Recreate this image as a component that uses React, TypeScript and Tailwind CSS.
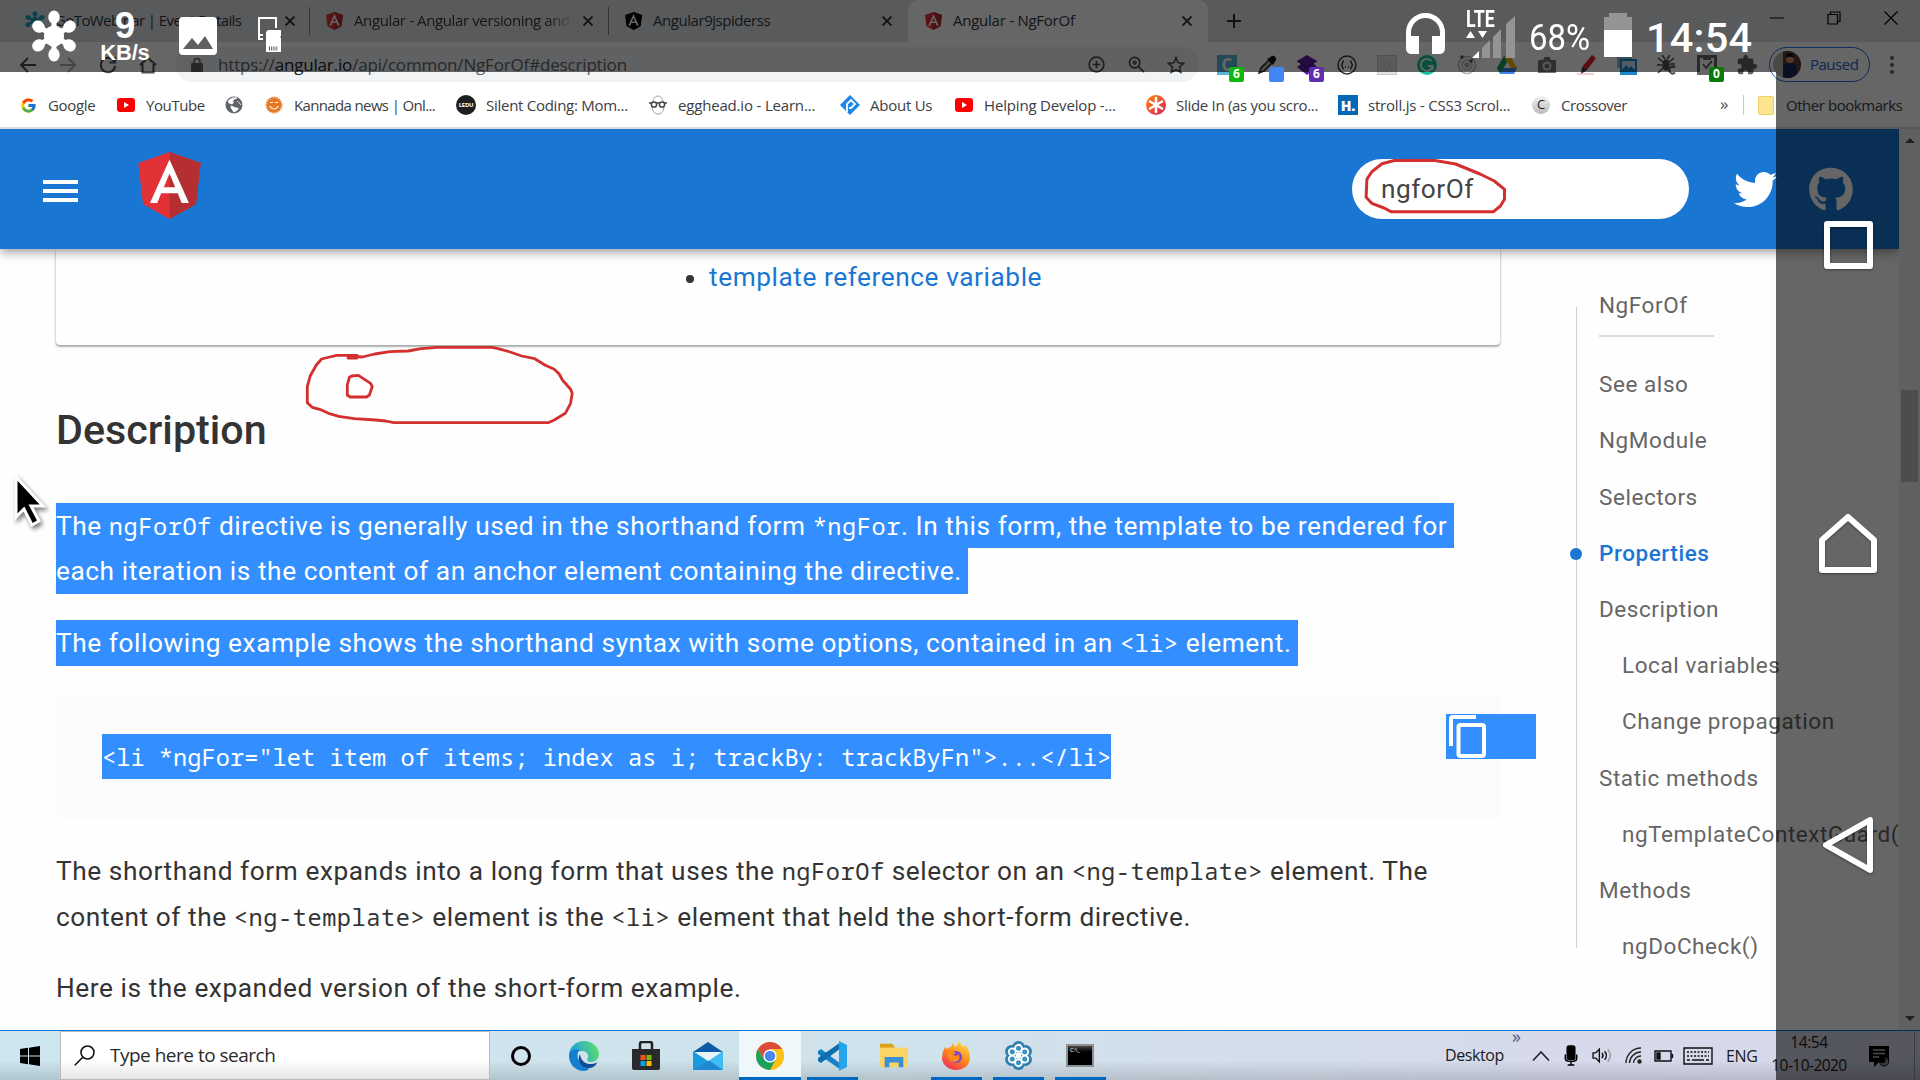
import type { ReactNode } from "react";
import { FcGoogle } from "react-icons/fc";
import { FaTwitter, FaGithub } from "react-icons/fa";

function AngularLogo({ className, dark }: { className: string; dark?: boolean }) {
  return (
    <svg viewBox="31 30 188 200" preserveAspectRatio="none" className={className}>
      <path d="M125 30 31.9 63.2 46.1 186.3 125 230 203.9 186.3 218.1 63.2Z" fill={dark ? "#0b0b0d" : "#e23237"} />
      <path d="M125 30V230L203.9 186.3 218.1 63.2Z" fill={dark ? "#000" : "#b52e31"} />
      <path d="M125 52.1 66.8 182.6h21.7l11.7-29.2h49.4l11.7 29.2H183ZM142 135.4H108l17-40.9Z" fill="#fff" fillRule="evenodd" />
    </svg>
  );
}

const petals = [0, 60, 120, 180, 240, 300];

function Flower({ className, fill }: { className: string; fill: string }) {
  return (
    <svg viewBox="0 0 50 54" className={className} preserveAspectRatio="none" fill={fill} stroke={fill}>
      <circle cx="25" cy="27" r="11" stroke="none" />
      {petals.map((a) => (
        <g key={a} transform={`rotate(${a} 25 27)`}>
          <path d="M25 22V8" strokeWidth="5.5" />
          <ellipse cx="25" cy="7.5" rx="6.2" ry="7" stroke="none" />
        </g>
      ))}
    </svg>
  );
}

function YouTubeIcon() {
  return (
    <svg viewBox="0 0 20 16" className="h-[16px] w-[20px]">
      <rect x="1" y="1" width="18" height="14" rx="3" fill="#f00" />
      <path d="M8 5v6l5-3z" fill="#fff" />
    </svg>
  );
}

function Close({ className = "h-[10px] w-[10px]" }: { className?: string }) {
  return (
    <svg viewBox="0 0 10 10" className={className} stroke="#2b2e31" strokeWidth="1.9">
      <path d="M.5.5l9 9M9.5.5l-9 9" />
    </svg>
  );
}

function Tab({ icon, title, titleClass, active, close, sep }: { icon: ReactNode; title: string; titleClass: string; active?: boolean; close: string; sep?: boolean }) {
  return (
    <div className={active ? "flex h-[42px] w-[300px] items-center rounded-t-[10px] bg-white pl-[15px]" : "flex h-[42px] w-[299px] items-center pl-[14px]"}>
      <div className="flex w-[20px] shrink-0 justify-center">{icon}</div>
      <div className={`ml-[10px] h-[22px] shrink-0 overflow-hidden whitespace-nowrap text-[15px] leading-[21px] text-[#35383c] ${titleClass}`}>{title}</div>
      <div className={`shrink-0 ${close}`}>
        <Close />
      </div>
      {sep && <div className="ml-auto h-[28px] w-px bg-[#7d8084]" />}
    </div>
  );
}

function Cell({ children }: { children?: ReactNode }) {
  return <div className="relative flex h-[36px] w-[40px] shrink-0 items-center justify-center">{children}</div>;
}

function Badge({ children, className }: { children?: ReactNode; className: string }) {
  return (
    <div className={`absolute left-[22px] top-[20px] z-50 flex h-[15px] w-[15px] items-center justify-center rounded-[2px] text-[12px] font-bold leading-none text-white ${className}`}>
      {children}
    </div>
  );
}

function TabStrip() {
  return (
    <div className="flex h-[42px] w-full bg-[#dee1e6] pl-[11px]">
      <Tab icon={<Flower className="h-[20px] w-[20px]" fill="#1aa3b8" />} title="GoToWebinar | Event Details" titleClass="w-[200px] tracking-[-0.6px]" close="ml-[30px]" sep />
      <Tab
        icon={<AngularLogo className="h-[18px] w-[17px]" />}
        title="Angular - Angular versioning and"
        titleClass="w-[219px] tracking-[-0.38px] [mask-image:linear-gradient(90deg,#000_88%,transparent)]"
        close="ml-[10px]"
        sep
      />
      <Tab icon={<AngularLogo dark className="h-[18px] w-[17px]" />} title="Angular9jspiderss" titleClass="w-[219px] tracking-[-0.45px]" close="ml-[10px]" />
      <Tab icon={<AngularLogo className="h-[18px] w-[17px]" />} title="Angular - NgForOf" titleClass="w-[219px] tracking-[-0.25px]" active close="ml-[10px]" />
      <div className="flex h-[42px] items-center pl-[18px]">
        <svg viewBox="0 0 16 16" className="h-[16px] w-[16px]" stroke="#2b2e31" strokeWidth="2">
          <path d="M8 1v14M1 8h14" />
        </svg>
      </div>
      <div className="ml-auto flex h-[36px] items-center gap-[43px] pr-[22px]">
        <svg viewBox="0 0 14 14" className="h-[14px] w-[14px]" stroke="#000">
          <path d="M0 7h14" />
        </svg>
        <svg viewBox="0 0 14 14" className="h-[14px] w-[14px]" stroke="#000" fill="none" strokeWidth="1.2">
          <path d="M1 3.5h9.500v9.500H1zM3.500 3.500V1H13v9.500h-2.500" />
        </svg>
        <svg viewBox="0 0 14 14" className="h-[14px] w-[14px]" stroke="#000" strokeWidth="1.2">
          <path d="M.5.5l13 13M13.500.5l-13 13" />
        </svg>
      </div>
    </div>
  );
}

function Toolbar() {
  return (
    <div className="flex h-[45px] w-full items-center bg-white pl-[8px]">
      <div className="flex w-[167px] text-[#3c4043]">
        <Cell>
          <svg viewBox="0 0 18 18" className="h-[18px] w-[18px]" fill="none" stroke="#4a4d51" strokeWidth="2">
            <path d="M17 9H2M9 2 2 9l7 7" />
          </svg>
        </Cell>
        <Cell>
          <svg viewBox="0 0 18 18" className="h-[18px] w-[18px]" fill="none" stroke="#a9abae" strokeWidth="2">
            <path d="M1 9h15M9 2l7 7-7 7" />
          </svg>
        </Cell>
        <Cell>
          <svg viewBox="0 0 18 18" className="h-[18px] w-[18px]" fill="none" stroke="#4a4d51" strokeWidth="2">
            <path d="M15 5A7.200 7.200 0 1 0 16.200 10M16 1v5.500h-5.500" />
          </svg>
        </Cell>
        <Cell>
          <svg viewBox="0 0 18 18" className="h-[18px] w-[18px]" fill="none" stroke="#4a4d51" strokeWidth="2">
            <path d="M1 9 9 2l8 7M3.500 8v8.500h11V8" />
          </svg>
        </Cell>
      </div>
      <div className="flex h-[35px] w-[1024px] shrink-0 items-center rounded-full bg-[#f1f3f4] pl-[16px]">
        <svg viewBox="0 0 12 14" className="h-[14px] w-[12px]" fill="#5f6368">
          <rect x="0" y="5" width="12" height="9" rx="1.200" />
          <path d="M3 6V3.500a3 3 0 0 1 6 0V6" fill="none" stroke="#5f6368" strokeWidth="1.500" />
        </svg>
        <div className="ml-[15px] whitespace-nowrap text-[17px] tracking-[-0.170px] text-[#606468]">
          https://<span className="text-[#202124]">angular.io</span>/api/common/NgForOf#description
        </div>
        <div className="ml-auto flex pr-[3px]">
          <Cell>
            <svg viewBox="0 0 18 18" className="h-[17px] w-[17px]" fill="none" stroke="#4a4d51" strokeWidth="1.800">
              <circle cx="9" cy="9" r="7.800" />
              <path d="M9 5v8M5 9h8" />
            </svg>
          </Cell>
          <Cell>
            <svg viewBox="0 0 18 18" className="h-[17px] w-[17px]" fill="none" stroke="#4a4d51" strokeWidth="1.800">
              <circle cx="7" cy="7" r="5.500" />
              <path d="M11 11l6 6M7 4.500v5M4.500 7h5" />
            </svg>
          </Cell>
          <Cell>
            <svg viewBox="0 0 18 18" className="h-[18px] w-[18px]" fill="none" stroke="#4a4d51" strokeWidth="1.600">
              <path d="M9 1.500l2.200 5.200 5.600.5-4.300 3.700 1.300 5.500L9 13.500l-4.800 2.900 1.300-5.500L1.200 7.200l5.600-.5z" />
            </svg>
          </Cell>
        </div>
      </div>
      <div className="ml-[8px] flex">
        <Cell>
          <div className="flex h-[20px] w-[20px] items-center justify-center bg-[#59b6d8] text-[17px] font-bold text-white">C</div>
          <Badge className="bg-[#0bb80b]">6</Badge>
        </Cell>
        <Cell>
          <svg viewBox="0 0 20 20" className="h-[20px] w-[20px]">
            <path d="M2 18l2-5 8-8 3 3-8 8z" fill="#bbb" stroke="#222" strokeWidth="1.500" />
            <path d="M10 4l6 6 1-2 2-3c1-2-2-5-4-4l-3 2z" fill="#111" />
          </svg>
          <Badge className="bg-[#4285f4]" />
        </Cell>
        <Cell>
          <svg viewBox="0 0 20 20" className="h-[20px] w-[20px]" fill="#5a1fa0">
            <path d="M10 0l10 6-4 2 4 4-10 8L0 12l4-3-4-3z" />
            <path d="M0 6l10 6 10-6" fill="none" stroke="#3c1080" />
          </svg>
          <Badge className="bg-[#5f2eb0]">6</Badge>
        </Cell>
        <Cell>
          <svg viewBox="0 0 20 20" className="h-[20px] w-[20px]" fill="none" stroke="#333" strokeWidth="1.400">
            <circle cx="10" cy="10" r="9" />
            <path d="M7 6c-2 0-1 3-2.500 4C6 11 5 14 7 14M13 6c2 0 1 3 2.500 4-1.500 1-.5 4-2.500 4M8 12h1M11 12h1" />
          </svg>
        </Cell>
        <Cell>
          <svg viewBox="0 0 20 20" className="h-[20px] w-[20px]" fill="none" stroke="#c9c9c9">
            <rect x=".5" y=".5" width="19" height="19" fill="#e4e4e4" />
            <circle cx="10" cy="10" r="3" />
            <path d="M4 4l3 3M16 4l-3 3M4 16l3-3M16 16l-3-3M10 2v3M10 15v3M2 10h3M15 10h3" />
          </svg>
        </Cell>
        <Cell>
          <svg viewBox="0 0 20 20" className="h-[20px] w-[20px]" fill="none">
            <circle cx="10" cy="10" r="10" fill="#15c39a" />
            <path d="M14.500 6A6 6 0 1 0 15.500 12M15.500 15v-4H11" stroke="#fff" strokeWidth="1.900" />
          </svg>
        </Cell>
        <Cell>
          <svg viewBox="0 0 20 20" className="h-[20px] w-[20px]" fill="none" stroke="#b3b3b3" strokeWidth="1.500">
            <circle cx="10" cy="10" r="8.500" />
            <circle cx="10" cy="10" r="5" />
            <circle cx="10" cy="10" r="2" fill="#b3b3b3" />
            <circle cx="5" cy="2" r="1" stroke="#555" />
            <circle cx="14" cy="6" r="1" stroke="#555" />
          </svg>
        </Cell>
        <Cell>
          <svg viewBox="0 0 20 18" className="h-[18px] w-[20px]">
            <path d="M7 0 0 12l3 6 7-12z" fill="#0f9d58" />
            <path d="M7 0h6l7 12h-6z" fill="#f4b400" />
            <path d="M6 12h14l-3 6H3z" fill="#4285f4" />
          </svg>
        </Cell>
        <Cell>
          <svg viewBox="0 0 18 16" className="h-[18px] w-[18px]" fill="#777">
            <path d="M1 3h4l1.500-3h5L13 3h4l1 1v12H0V4z" />
            <circle cx="9" cy="9" r="4.500" fill="#ddd" />
            <circle cx="9" cy="9" r="2.500" />
          </svg>
        </Cell>
        <Cell>
          <svg viewBox="0 0 20 20" className="h-[20px] w-[20px]">
            <path d="M15 0l4 3-9 12-5-3z" fill="#d9222a" />
            <path d="M5 12l5 3-6 4z" fill="#333" />
            <path d="M0 19h17" stroke="#e99" />
          </svg>
        </Cell>
        <Cell>
          <svg viewBox="0 0 20 20" className="h-[20px] w-[20px]">
            <path d="M0 0h15v13H0z" fill="#7fc0e4" />
            <path d="M3 4h17v16H3z" fill="#1c87c9" />
            <path d="M5 6h13v9H5z" fill="#cfe9f7" />
            <path d="M5 15l4-5 3 3 2-2 4 4z" fill="#1c87c9" />
          </svg>
        </Cell>
        <Cell>
          <svg viewBox="0 0 20 20" className="h-[20px] w-[20px]" stroke="#4f4f4f" strokeWidth="1.500" fill="none">
            <ellipse cx="9" cy="10" rx="3" ry="5" fill="#4f4f4f" />
            <path d="M1 3l5 4M17 3l-5 4M0 10h5M18 9h-5M1 18l5-5M5 0l3 4M13 0l-3 4" />
            <path d="M18 12.500a3.400 3.400 0 1 0 0 5" strokeWidth="2" />
          </svg>
        </Cell>
        <Cell>
          <svg viewBox="0 0 20 20" className="h-[20px] w-[20px]" fill="none" stroke="#666" strokeWidth="3">
            <path d="M1.500 1.500h17v17h-17z" />
            <path d="M6 9l3 4 6-7M6 4h8" strokeWidth="2" />
          </svg>
          <Badge className="bg-[#077a07]">0</Badge>
        </Cell>
        <Cell>
          <svg viewBox="0 0 24 24" className="h-[22px] w-[22px]" fill="#5f6368">
            <path d="M20.500 11H19V7c0-1.100-.9-2-2-2h-4V3.500a2.500 2.500 0 0 0-5 0V5H4c-1.100 0-2 .9-2 2v3.800h1.500a2.700 2.700 0 0 1 0 5.400H2V20c0 1.100.9 2 2 2h3.800v-1.500a2.700 2.700 0 0 1 5.400 0V22H17c1.100 0 2-.9 2-2v-4h1.500a2.500 2.500 0 0 0 0-5z" />
          </svg>
        </Cell>
      </div>
      <div className="ml-[2px] flex h-[35px] w-[101px] items-center rounded-full border-[1.500px] border-[#1a73e8] bg-white pl-[3px]">
        <div className="flex h-[27px] w-[28px] items-end justify-center overflow-hidden rounded-full bg-[#b9b4a6]">
          <svg viewBox="0 0 28 27" className="h-[27px] w-[28px]">
            <path d="M10 0h18v27H10z" fill="#5a3a32" />
            <path d="M10 27V16q2-4 7-4t7 4v11z" fill="#1b2a55" />
            <circle cx="17" cy="8" r="4" fill="#c98d6c" />
            <path d="M13 7q0-5 4-5t4 5q-4-3-8 0z" fill="#16100e" />
          </svg>
        </div>
        <div className="ml-[9px] text-[15px] tracking-[-0.5px] text-[#1a67d2]">Paused</div>
      </div>
      <div className="ml-[20px] flex flex-col gap-[3px]">
        <div className="h-[4px] w-[4px] rounded-full bg-[#5f6368]" />
        <div className="h-[4px] w-[4px] rounded-full bg-[#5f6368]" />
        <div className="h-[4px] w-[4px] rounded-full bg-[#5f6368]" />
      </div>
    </div>
  );
}

function Bookmark({ icon, label, className }: { icon: ReactNode; label?: string; className: string }) {
  return (
    <div className={`flex shrink-0 items-center whitespace-nowrap text-[15px] text-[#3c4043] ${className}`}>
      <div className="flex w-[20px] shrink-0 justify-center">{icon}</div>
      {label && <div className="ml-[10px]">{label}</div>}
    </div>
  );
}

function BookmarksBar() {
  return (
    <div className="flex h-[42px] w-full items-center border-b-2 border-[#dadce0] bg-white pb-[4px] pl-[18px]">
      <Bookmark className="w-[98px] tracking-[-0.350px]" icon={<FcGoogle size={17} />} label="Google" />
      <Bookmark className="w-[108px] tracking-[-0.400px]" icon={<YouTubeIcon />} label="YouTube" />
      <Bookmark
        className="w-[40px]"
        icon={
          <svg viewBox="0 0 18 18" className="h-[18px] w-[18px]">
            <circle cx="9" cy="9" r="8.500" fill="#5f6368" />
            <path d="M3 6c3 3 6 2 5 0s2-3 4-4c-4-1-8 1-9 4zM6 10c2 0 3 2 6 2s0 3-3 4c-2-1-1-3-3-4zM12 5c2 2 3 2 4 4" fill="#fff" stroke="#fff" strokeWidth=".8" />
          </svg>
        }
      />
      <Bookmark
        className="w-[192px] tracking-[-0.640px]"
        icon={
          <svg viewBox="0 0 18 18" className="h-[18px] w-[18px]">
            <circle cx="9" cy="9" r="7.500" fill="#e87722" stroke="#e8873c" strokeWidth="2" strokeDasharray="1.500 1" />
            <path d="M4.500 10q4.500 6 9 0M5 6.500h3M10 6.500h3" fill="none" stroke="#fff" strokeWidth="1.200" />
          </svg>
        }
        label="Kannada news | Onl..."
      />
      <Bookmark
        className="w-[192px] tracking-[-0.270px]"
        icon={
          <div className="flex h-[20px] w-[20px] items-center justify-center rounded-full bg-[#1d1e20] text-[6px] font-bold tracking-[-0.3px] text-white">LEDU</div>
        }
        label="Silent Coding: Mom..."
      />
      <Bookmark
        className="w-[192px] tracking-[-0.180px]"
        icon={
          <svg viewBox="0 0 20 20" className="h-[20px] w-[20px]" fill="none" stroke="#444">
            <path d="M10 1c4 0 6 6 6 10s-2 8-6 8-6-4-6-8S6 1 10 1z" stroke="#999" />
            <path d="M1 8h18" strokeWidth="1.500" />
            <circle cx="6" cy="9.500" r="2.600" strokeWidth="1.500" fill="#fff" />
            <circle cx="14" cy="9.500" r="2.600" strokeWidth="1.500" fill="#fff" />
          </svg>
        }
        label="egghead.io - Learn..."
      />
      <Bookmark
        className="w-[114px] tracking-[-0.250px]"
        icon={
          <svg viewBox="0 0 20 20" className="h-[20px] w-[20px]">
            <path d="M10 0l10 10-10 10L0 10z" fill="#1c87e8" />
            <path d="M7 17V9l4-4 4 4-4 4H9" fill="none" stroke="#fff" strokeWidth="1.800" />
          </svg>
        }
        label="About Us"
      />
      <Bookmark className="w-[192px] tracking-[-0.170px]" icon={<YouTubeIcon />} label="Helping Develop -..." />
      <Bookmark
        className="w-[192px] tracking-[-0.300px]"
        icon={
          <svg viewBox="0 0 20 20" className="h-[20px] w-[20px]">
            <defs>
              <linearGradient id="slide" x1="0" y1="0" x2="1" y2="1">
                <stop offset="0" stopColor="#ff8a00" />
                <stop offset="1" stopColor="#da1b60" />
              </linearGradient>
            </defs>
            <circle cx="10" cy="10" r="10" fill="url(#slide)" />
            <path d="M10 3v14M4 6.500l12 7M16 6.500l-12 7" stroke="#fff" strokeWidth="2.600" strokeLinecap="round" />
          </svg>
        }
        label="Slide In (as you scro..."
      />
      <Bookmark
        className="w-[193px] tracking-[-0.200px]"
        icon={<div className="flex h-[20px] w-[20px] items-center justify-center bg-[#0568b4] text-[14px] font-extrabold text-white">H.</div>}
        label="stroll.js - CSS3 Scrol..."
      />
      <Bookmark
        className="w-[189px] tracking-[-0.450px]"
        icon={<div className="flex h-[18px] w-[18px] items-center justify-center rounded-full bg-linear-to-b from-[#f4f4f4] to-[#b9b9b9] text-[13px] tracking-normal text-[#222]">C</div>}
        label="Crossover"
      />
      <div className="w-[23px] pb-[3px] text-[17px] text-[#4a4d51]">»</div>
      <div className="h-[20px] w-px bg-[#c9cbce]" />
      <div className="ml-[14px] h-[19px] w-[16px] rounded-[2px] border border-[#f0cf6a] bg-[#ffe48f]" />
      <div className="ml-[12px] whitespace-nowrap text-[15px] tracking-[-0.450px] text-[#3c4043]">Other bookmarks</div>
    </div>
  );
}

function SiteHeader() {
  return (
    <header className="relative z-10 flex h-[120px] w-[1899px] items-center bg-[#1976d2] shadow-[0_3px_10px_rgba(0,0,0,0.4)]">
      <div className="ml-[43px] mt-[3px] flex flex-col gap-[5px]">
        <div className="h-[4px] w-[35px] bg-white" />
        <div className="h-[4px] w-[35px] bg-white" />
        <div className="h-[4px] w-[35px] bg-white" />
      </div>
      <AngularLogo className="mb-[7px] ml-[60px] h-[67px] w-[63px]" />
      <div className="relative ml-[1151px] flex h-[60px] w-[337px] items-center rounded-full bg-white pl-[29px] pt-[2px] text-[26.250px] tracking-[0.500px] text-[#444]">
        ngforOf
        <svg viewBox="0 0 145 60" className="absolute left-[11px] top-0 h-[60px] w-[145px] overflow-visible" fill="none" stroke="#d32f2f" strokeWidth="3" strokeLinejoin="round">
          <path d="M72 1.500H31.300L19 4.700 8.800 12.700 3.900 20.300 3.100 38.300 8.800 44.300 21 49 28 52.700H130.500L137.400 47 141.500 40.300V30.300L131.300 22 117 15 92.500 5Z" />
        </svg>
      </div>
      <FaTwitter className="ml-[45px] h-[43px] w-[43px] text-white" />
      <FaGithub className="ml-[31px] h-[45px] w-[46px] text-white" />
    </header>
  );
}

function Code({ children }: { children: ReactNode }) {
  return <code className="font-['Droid_Sans_Mono','Noto_Sans_Mono','DejaVu_Sans_Mono',monospace] text-[23.600px]">{children}</code>;
}

function Line({ children, className = "" }: { children: ReactNode; className?: string }) {
  return <div className={`h-[45px] shrink-0 whitespace-nowrap leading-[46px] ${className}`}>{children}</div>;
}

const toc = [
  { label: "See also" },
  { label: "NgModule" },
  { label: "Selectors" },
  { label: "Properties", active: true },
  { label: "Description" },
  { label: "Local variables", nested: true },
  { label: "Change propagation", nested: true },
  { label: "Static methods" },
  { label: "ngTemplateContextGuard()", nested: true },
  { label: "Methods" },
  { label: "ngDoCheck()", nested: true },
];

function Toc() {
  return (
    <aside className="w-[329px] shrink-0 pl-[6px] pt-[39px]">
      <div className="flex text-[22.500px] tracking-[0.562px] text-[#666]">
        <div className="mt-[19px] h-[641px] w-px shrink-0 bg-[#d0d0d0]" />
        <div className="pl-[22px]">
          <div className="flex h-[36px] items-center">NgForOf</div>
          <div className="mt-[11px] h-[2px] w-[115px] bg-[#dbdbdb]" />
          <div className="mt-[20px]">
            {toc.map((t) => (
              <div key={t.label} className={`relative flex h-[56.200px] items-center whitespace-nowrap ${t.nested ? "pl-[23px]" : ""} ${t.active ? "font-medium text-[#1976d2]" : ""}`}>
                {t.active && <span className="absolute -left-[29px] h-[12px] w-[12px] rounded-full bg-[#1976d2]" />}
                {t.label}
              </div>
            ))}
          </div>
        </div>
      </div>
    </aside>
  );
}

function Article() {
  return (
    <main className="relative w-[1570px] shrink-0 pl-[56px] text-[26.250px] tracking-[0.562px] text-[#333]">
      <div className="flex h-[96px] w-[1444px] items-center rounded-b-[4px] bg-[#fefefe] pb-[38px] pl-[630px] shadow-[0_2px_2px_rgba(10,16,20,0.3),0_0_3px_rgba(10,16,20,0.2)]">
        <div className="mt-[2px] h-[8px] w-[8px] rounded-full bg-[#333]" />
        <a className="ml-[15px] text-[#1976d2]">template reference variable</a>
      </div>
      <svg viewBox="0 0 270 80" className="absolute left-[304px] top-[97px] h-[80px] w-[270px] overflow-visible" fill="none" stroke="#d32f2f" strokeWidth="2.800" strokeLinejoin="round" strokeLinecap="round">
        <path d="M53 12H44M53 9.300H32.700L25.800 11 17.600 13 12.300 19 6.200 30 3.300 40.700V56.700L8.200 61.300 15.600 63.300 24.600 67.300 34.800 70.300 50.300 72.700 71.500 74 81.700 75 89.900 76.700H244.200L250.300 74 261.300 67.300 266.600 57.300 268.200 47.300 266.600 43.300 258.400 34 255.200 28 250.300 23.300 240.900 19 230.700 12.700 217.600 10 206.200 6 193.100 2.300 187.800 1.300H132.700L117.200 2.700 104.200 5 85.800 5.700 70.700 8 58.400 11 52 10.500" />
        <path d="M47.800 30 54.400 29.300 66.600 37.300 68.200 40.700 65.400 49 62.500 51H46.200L43.300 49V39L45.400 31.300Z" />
      </svg>
      <h2 className="mt-[50px] h-[70px] text-[41.250px] font-medium leading-[70px] tracking-[0px]">Description</h2>
      <div className="mt-[38px] text-white">
        <Line className="w-[1398px] bg-[#338fff]">
          The <Code>ngForOf</Code> directive is generally used in the shorthand form <Code>*ngFor</Code>. In this form, the template to be rendered for
        </Line>
        <Line className="h-[46px] w-[912px] bg-[#338fff]">each iteration is the content of an anchor element containing the directive.</Line>
        <Line className="mt-[26px] h-[46px] w-[1242px] bg-[#338fff]">
          The following example shows the shorthand syntax with some options, contained in an <Code>&lt;li&gt;</Code> element.
        </Line>
      </div>
      <div className="mt-[30px] flex h-[122px] w-[1444px] items-start rounded-[5px] bg-[#fbfbfb] pl-[46px]">
        <Line className="mt-[38px] w-[1009px] bg-[#338fff] tracking-[0.060px] text-white">
          <Code>{'<li *ngFor="let item of items; index as i; trackBy: trackByFn">...</li>'}</Code>
        </Line>
        <div className="ml-[335px] mt-[18px] h-[45px] w-[90px] shrink-0 bg-[#338fff] pl-[3px] pt-px">
          <svg viewBox="0 0 37 43" className="h-[43px] w-[37px]" fill="none" stroke="#fff" strokeWidth="4">
            <path d="M2 31V4q0-2 2-2h23" />
            <rect x="9.500" y="10" width="25.500" height="31" rx="2" />
          </svg>
        </div>
      </div>
      <div className="mt-[30px]">
        <Line className="h-[46px]">
          The shorthand form expands into a long form that uses the <Code>ngForOf</Code> selector on an <Code>&lt;ng-template&gt;</Code> element. The
        </Line>
        <Line>
          content of the <Code>&lt;ng-template&gt;</Code> element is the <Code>&lt;li&gt;</Code> element that held the short-form directive.
        </Line>
        <Line className="mt-[26px]">Here is the expanded version of the short-form example.</Line>
      </div>
      <svg viewBox="0 0 32 54" className="absolute left-[12px] top-[226px] h-[54px] w-[34px] drop-shadow-[2px_3px_2px_rgba(0,0,0,0.5)]">
        <path d="M3 2v40l8-8 8 16 7-4-8-15h12z" fill="#000" stroke="#fff" strokeWidth="3" />
      </svg>
    </main>
  );
}

function TaskCell({ children, active, running }: { children: ReactNode; active?: boolean; running?: boolean }) {
  return (
    <div className={`relative flex h-[49px] w-[62px] shrink-0 items-center justify-center ${active ? "bg-[#f0f7fa]" : ""}`}>
      {children}
      {active && <div className="absolute bottom-0 left-0 h-[3px] w-full bg-[#0067c0]" />}
      {running && <div className="absolute bottom-0 left-[6px] h-[3px] w-[51px] bg-[#0067c0]" />}
    </div>
  );
}

function Taskbar() {
  return (
    <div className="flex h-[50px] w-full border-t border-[#0078d7] bg-[linear-gradient(180deg,transparent_60%,rgba(0,0,0,0.14)),linear-gradient(90deg,#cde6ef,#d0e2ec_50%,#d6daea_80%,#d4d8ea)] text-[#1a1a1a]">
      <div className="flex w-[60px] items-center justify-center">
        <svg viewBox="0 0 20 20" className="h-[20px] w-[20px]" fill="#000">
          <path d="M0 3l8-1.200v7.700H0zM9 1.700 20 0v9.500H9zM0 10.500h8v7.700L0 17zM9 10.500h11V20L9 18.300z" />
        </svg>
      </div>
      <div className="flex w-[430px] items-center border border-[#b8bcbe] bg-linear-to-b from-white from-60% to-[#e6e6e6] pl-[13px]">
        <svg viewBox="0 0 21 21" className="h-[21px] w-[21px]" fill="none" stroke="#111" strokeWidth="1.600">
          <circle cx="13.500" cy="7.500" r="6.500" />
          <path d="M9 12 .8 20.200" />
        </svg>
        <div className="ml-[15px] whitespace-nowrap text-[19px] tracking-[-0.500px] text-[#2b2b2b]">Type here to search</div>
      </div>
      <TaskCell>
        <div className="h-[20px] w-[20px] rounded-full border-[3px] border-black" />
      </TaskCell>
      <div className="w-px" />
      <TaskCell>
        <svg viewBox="0 0 30 30" className="h-[30px] w-[30px]">
          <defs>
            <linearGradient id="edge-top" x1="0" y1="0.500" x2="1" y2="0.300">
              <stop offset="0" stopColor="#1b9de2" />
              <stop offset="1" stopColor="#5fdc6f" />
            </linearGradient>
          </defs>
          <path d="M0 15C0 6 7 0 15 0s15 6 15 13c0 5-4 8-8 8-3 0-5-2-3-4 1-4-2-7-6-7C7 10 0 13 0 15z" fill="url(#edge-top)" />
          <path d="M0 15c0-5 6-8 11-6-4 2-4 14 8 18 3 1-2 3-4 3C6 30 0 23 0 15z" fill="#1380cf" />
          <path d="M11 13c-4 7 2 15 10 14 4-.5 7-4 7-5.500-9 4-16 0-17-8.500z" fill="#0f4c96" />
        </svg>
      </TaskCell>
      <TaskCell>
        <svg viewBox="0 0 30 30" className="h-[30px] w-[30px]">
          <path d="M9 9V3q0-2 2-2h8q2 0 2 2v6" fill="none" stroke="#222" strokeWidth="2.500" />
          <path d="M1 8h28v19q0 2-2 2H3q-2 0-2-2z" fill="#2a2a2c" />
          <path d="M9.500 14h5v5h-5z" fill="#f25022" />
          <path d="M15.500 14h5v5h-5z" fill="#7fba00" />
          <path d="M9.500 20h5v5h-5z" fill="#00a4ef" />
          <path d="M15.500 20h5v5h-5z" fill="#ffb900" />
        </svg>
      </TaskCell>
      <TaskCell>
        <svg viewBox="0 0 30 28" className="h-[28px] w-[30px]">
          <path d="M0 10 15 0l15 10v4H0z" fill="#0d5aa9" />
          <path d="M1 10h28L15 20z" fill="#e9f3fa" />
          <path d="M0 9.500 30 28H0z" fill="#1b9ae0" />
          <path d="M30 9.500V28L15 19z" fill="#3fbdf1" />
          <path d="M0 28 16 18.500 30 28z" fill="#2188d4" />
          <path d="M3 10h24l-12 9z" fill="#e9f3fa" />
        </svg>
      </TaskCell>
      <TaskCell active>
        <svg viewBox="0 0 28 28" className="h-[28px] w-[28px]">
          <circle cx="14" cy="14" r="14" fill="#fbc116" />
          <path d="M1.900 7A14 14 0 0 1 26.100 7L14 7.600 8 17.500z" fill="#dd4b3e" />
          <path d="M1.900 7A14 14 0 0 0 14 28l6-10.500-6 3-6-3z" fill="#1aa15f" />
          <path d="M26.100 7H14v13.500L20 17.500 14 28A14 14 0 0 0 26.100 7z" fill="#fbc116" />
          <circle cx="14" cy="14" r="6.600" fill="#fff" />
          <circle cx="14" cy="14" r="5.300" fill="#4a87ee" />
        </svg>
      </TaskCell>
      <TaskCell running>
        <svg viewBox="0 0 30 30" className="h-[30px] w-[30px]">
          <path d="M1 10l3-2 20 15v6L1 13z" fill="#1580c4" />
          <path d="M1 20l3 2L24 7V1L1 17z" fill="#0e6cb0" />
          <path d="M22 0l8 4v22l-8 4z" fill="#28a4ec" />
        </svg>
      </TaskCell>
      <TaskCell>
        <svg viewBox="0 0 30 26" className="h-[26px] w-[28px]">
          <path d="M0 0h13l3 4v4H0z" fill="#d9a018" />
          <path d="M0 4h30v21H0z" fill="#fbd467" />
          <path d="M5 14h20v11h-5v-5H10v5H5z" fill="#3b8fd6" />
        </svg>
      </TaskCell>
      <TaskCell running>
        <svg viewBox="0 0 28 30" className="h-[30px] w-[28px]">
          <defs>
            <linearGradient id="fox" x1="0.800" y1="0" x2="0.200" y2="1">
              <stop offset="0" stopColor="#ffe14a" />
              <stop offset="0.500" stopColor="#ff8a1c" />
              <stop offset="1" stopColor="#f0285a" />
            </linearGradient>
          </defs>
          <path d="M3 6l2 2q2-2 4-2l2-4q1 3 3 4l3-6q2 4 5 6l2-2q4 6 4 13c0 7-6 12-14 12S0 23 0 17Q0 11 3 6z" fill="url(#fox)" />
          <circle cx="14" cy="16" r="6" fill="#7a42d6" />
          <path d="M5 12q5-3 9 0l-3 2q4 2 6-1 2 8-5 8-6-1-7-9z" fill="#ff8a1c" />
        </svg>
      </TaskCell>
      <TaskCell running>
        <svg viewBox="0 0 30 32" className="h-[31px] w-[29px]" fill="none">
          {petals.map((a) => (
            <circle key={a} cx="15" cy="7.500" r="6.500" fill="#2f7fae" transform={`rotate(${a} 15 16)`} />
          ))}
          {petals.map((a) => (
            <circle key={a} cx="15" cy="8.500" r="3.600" fill="#3d92c2" stroke="#fff" strokeWidth="1.900" transform={`rotate(${a} 15 16)`} />
          ))}
          <circle cx="15" cy="16" r="3" fill="#fff" />
        </svg>
      </TaskCell>
      <TaskCell running>
        <div className="h-[23px] w-[28px] border-2 border-[#8d9194] bg-linear-to-b from-[#4a4a4a] to-black to-40% pl-[2px] text-[6px] leading-[8px] text-white">C:\_</div>
      </TaskCell>
      <div className="ml-auto flex items-center text-[15px] tracking-[-0.400px]">
        <div className="w-[67px] pb-[2px] text-[16px]">Desktop</div>
        <div className="w-[18px] pb-[39px] text-[18px] leading-[20px] text-[#4a5a88]">»</div>
        <svg viewBox="0 0 18 10" className="ml-[2px] h-[10px] w-[18px]" fill="none" stroke="#222" strokeWidth="1.600">
          <path d="M1 9.500 9 1l8 8.500" />
        </svg>
        <svg viewBox="0 0 14 22" className="ml-[14px] h-[21px] w-[14px]" fill="none" stroke="#000" strokeWidth="1.500">
          <rect x="3" y="1" width="8" height="14" rx="2" fill="#000" />
          <path d="M1 10v4q0 3 3 3h6q3 0 3-3v-4M7 17v4M3.500 21h7" />
        </svg>
        <svg viewBox="0 0 20 16" className="ml-[14px] h-[17px] w-[21px]" fill="none" stroke="#111" strokeWidth="1.300">
          <path d="M1 5.500h2.500L7 2v12l-3.500-3.500H1zM9.500 5.500q2 2.500 0 5M12 4q3.500 4 0 8" />
          <path d="M15 2q5 6 0 12" stroke="#999" />
        </svg>
        <svg viewBox="0 0 17 17" className="ml-[12px] h-[17px] w-[17px]" fill="none" stroke="#222" strokeWidth="1.400">
          <path d="M1 16A15 15 0 0 1 16 1M4.500 16A11.500 11.500 0 0 1 16 5M8.500 16A7.500 7.500 0 0 1 16 9" />
          <circle cx="14.500" cy="14.500" r="1.500" fill="#222" />
        </svg>
        <svg viewBox="0 0 20 12" className="ml-[12px] h-[12px] w-[20px]" fill="none" stroke="#111" strokeWidth="1.400">
          <path d="M1 1h16v10H1zM18.500 4v4" />
          <path d="M3 3h3v6H3z" fill="#111" />
        </svg>
        <svg viewBox="0 0 30 18" className="ml-[9px] h-[18px] w-[30px]" fill="none" stroke="#111" strokeWidth="1.400">
          <path d="M1 1h28v16H1z" />
          <path d="M4 5h22M4 9h22" strokeDasharray="2 1.500" />
          <path d="M4 13h3M9 13h12M23 13h3" />
        </svg>
        <div className="ml-[13px] w-[45px] text-[16px]">ENG</div>
        <div className="flex w-[76px] flex-col items-center whitespace-nowrap pb-[3px] text-[15.500px] leading-[23px]">
          <div>14:54</div>
          <div className="tracking-[-0.550px]">10-10-2020</div>
        </div>
        <svg viewBox="0 0 20 22" className="ml-[22px] h-[22px] w-[20px]">
          <path d="M0 1h20v16H10l-5 5v-5H0z" fill="#000" />
          <path d="M4 5h12M4 8.500h12M4 12h6" stroke="#bbb" strokeWidth="1.400" />
          <circle cx="15" cy="16.500" r="4.500" fill="#999" stroke="#000" />
          <circle cx="13.500" cy="15" r="3.200" fill="#000" />
        </svg>
        <div className="ml-[25px] mr-[5px] h-[49px] w-px bg-[#8f939c]" />
      </div>
    </div>
  );
}

function StatusBar() {
  return (
    <div className="flex h-[72px] w-full items-start bg-black/60 font-['Roboto',sans-serif] text-white">
      <Flower className="ml-[31px] mt-[10px] h-[52px] w-[46px]" fill="#fff" />
      <div className="ml-[23px] flex w-[50px] flex-col items-center pt-[9px] font-['Liberation_Sans',sans-serif] font-bold">
        <div className="text-[37px] leading-[34px]">9</div>
        <div className="-mt-px text-[22px] leading-[22px] tracking-[-0.200px]">KB/s</div>
      </div>
      <svg viewBox="0 0 38 38" className="ml-[29px] mt-[17px] h-[38px] w-[38px]">
        <rect width="38" height="38" rx="4" fill="#fff" />
        <path d="M4 32l9-11 6 7 7-9 8 13z" fill="#5f5f5f" />
      </svg>
      <svg viewBox="0 0 24 36" className="ml-[41px] mt-[17px] h-[36px] w-[24px]" fill="none" stroke="#fff">
        <path d="M5 22H1V1h17v10M1 18h4" strokeWidth="2" />
        <path d="M10 13h13v6l-1 1 1 1v14H8V15z" fill="#fff" stroke="none" />
        <path d="M11 31.500h9" stroke="#555" strokeWidth="4" strokeDasharray="1 1.200" />
      </svg>
      <svg viewBox="0 0 39 41" className="ml-[1124px] mt-[13px] h-[41px] w-[39px]" fill="#fff">
        <path d="M2.500 26V19.500a17 17 0 0 1 34 0V26" fill="none" stroke="#fff" strokeWidth="5" />
        <path d="M0 23h13v18H6q-6 0-6-6zM39 23H26v18h7q6 0 6-6z" />
      </svg>
      <div className="relative ml-[21px] mt-[10px] h-[48px] w-[49px]">
        <svg viewBox="0 0 49 48" className="h-[48px] w-[49px]">
          <path d="M0 28 4.500 21 9 28zM12 21h9l-4.500 7z" fill="#fff" />
          <path d="M16 38l8-8v18h-8zM27 27l8-8v29h-8zM40 14l9-8v42h-9z" fill="#949494" />
          <path d="M6 48l7-7v7z" fill="#fff" />
        </svg>
        <span className="absolute left-0 top-[-3px] origin-left scale-x-[0.740] text-[24px] font-bold leading-[24px]">LTE</span>
      </div>
      <div className="ml-[14px] mt-[19px] w-[75px] origin-left scale-x-[0.890] text-[37px] leading-[37px]">68%</div>
      <div className="mt-[13px] flex w-[28px] flex-col items-center">
        <div className="h-[4px] w-[18px] bg-[#949494]" />
        <div className="h-[13px] w-[28px] bg-[#949494]" />
        <div className="h-[27px] w-[28px] bg-white" />
      </div>
      <div className="ml-[14px] mt-[17px] text-[41.500px] font-medium leading-[42px] tracking-[0.200px]">14:54</div>
    </div>
  );
}

function NavStrip() {
  return (
    <div className="ml-auto flex h-[1008px] w-[144px] flex-col bg-black/60 pl-[43px] pt-[149px]">
      <svg viewBox="0 0 58 48" className="h-[48px] w-[58px] overflow-visible drop-shadow-[0_1px_1px_rgba(0,0,0,0.4)]" fill="none" stroke="#fff" strokeWidth="6" strokeLinejoin="round">
        <rect x="8" y="3" width="43" height="42" />
      </svg>
      <svg viewBox="0 0 58 59" className="mt-[245px] h-[59px] w-[58px] overflow-visible drop-shadow-[0_1px_1px_rgba(0,0,0,0.4)]" fill="none" stroke="#fff" strokeWidth="6" strokeLinejoin="round">
        <path d="M3 56V26L29 3l26 23v30z" />
      </svg>
      <svg viewBox="0 0 58 56" className="mt-[244px] h-[56px] w-[58px] overflow-visible drop-shadow-[0_1px_1px_rgba(0,0,0,0.4)]" fill="none" stroke="#fff" strokeWidth="6" strokeLinejoin="round">
        <path d="M51 3v50L7 28z" />
      </svg>
    </div>
  );
}

export default function App() {
  return (
    <div className="relative h-[1080px] w-[1920px] overflow-hidden bg-[#fefefe] font-['Segoe_UI','Open_Sans','Noto_Sans',sans-serif]">
      <TabStrip />
      <Toolbar />
      <BookmarksBar />
      <div className="flex h-[901px] w-full font-['Roboto',sans-serif]">
        <div className="h-[901px] w-[1899px] overflow-hidden">
          <SiteHeader />
          <div className="flex h-[781px]">
            <Article />
            <Toc />
          </div>
        </div>
        <div className="flex h-[901px] w-[21px] flex-col items-center bg-[#f1f1f1] py-[9px]">
          <div className="h-0 w-0 border-x-[5px] border-b-[5px] border-x-transparent border-b-[#505050]" />
          <div className="mt-[247px] h-[92px] w-[17px] bg-[#c1c1c1]" />
          <div className="mt-auto h-0 w-0 border-x-[5px] border-t-[5px] border-x-transparent border-t-[#505050]" />
        </div>
      </div>
      <Taskbar />
      <div className="absolute inset-0 z-40">
        <StatusBar />
        <NavStrip />
      </div>
    </div>
  );
}
